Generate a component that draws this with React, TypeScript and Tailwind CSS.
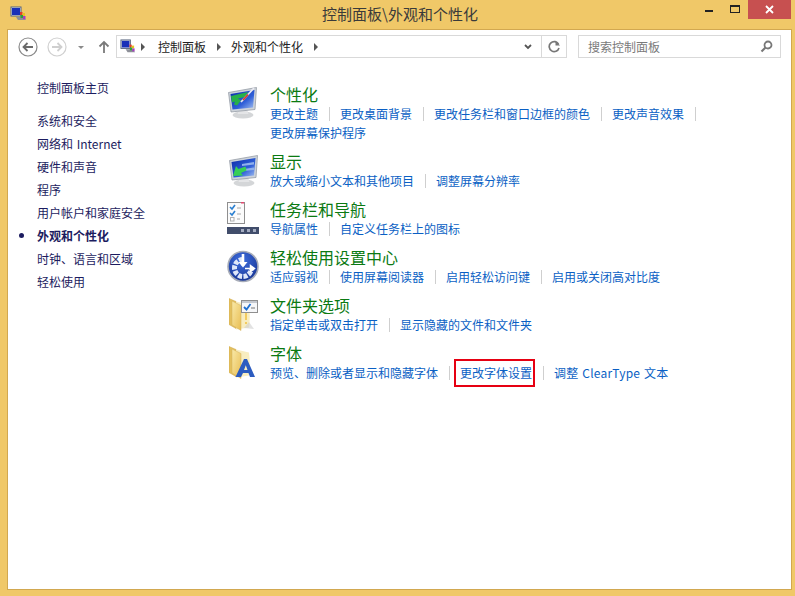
import React from "react";

const font = { fontFamily: '"Noto Sans CJK SC", "Noto Sans", sans-serif' };

function CpIcon({ size = 17 }: { size?: number }) {
  return (
    <svg width={size} height={size} viewBox="0 0 17 17">
      <rect x="1" y="1" width="10" height="9" fill="#dfe3ee" stroke="#55607a" />
      <rect x="2" y="2" width="8" height="7" fill="#1a2fb8" />
      <path d="M6 11h8l2 3H8z" fill="#8d8f98" />
      <rect x="10" y="6" width="2.5" height="3" fill="#e23c2c" />
      <rect x="12.5" y="7" width="2.5" height="3" fill="#e8c21e" />
      <rect x="10.5" y="9" width="2.5" height="3" fill="#2da33a" />
      <rect x="13" y="10" width="2.5" height="3" fill="#a63ec0" />
    </svg>
  );
}

function Monitor({ kind }: { kind: "brush" | "arrow" }) {
  const id = `scr-${kind}`;
  return (
    <svg width="31" height="32" viewBox="0 0 31 32">
      <defs>
        <linearGradient id={id} x1="0" y1="0" x2="1" y2="1">
          <stop offset="0" stopColor="#0b2aa8" />
          <stop offset=".6" stopColor="#2f5fd8" />
          <stop offset="1" stopColor="#a9c4f0" />
        </linearGradient>
      </defs>
      <ellipse cx="15" cy="28" rx="10.500" ry="3.500" fill="#d4d6d8" />
      <path d="M11 22h8l1.500 5h-11z" fill="#e4e5e7" />
      <path d="M0.500 5.500L28.500 0.500l-1.500 22L3 25z" fill="#cdd3da" stroke="#8c949e" strokeWidth=".7" />
      <path d="M2.500 7L26.500 3 25 20.500 4.500 22.500z" fill={`url(#${id})`} />
      {kind === "brush" ? (
        <>
          <path d="M3 9L20 5l-3 5-7 1.500 3 2-4 5-3-1 1-3-3 1z" fill="#27b04a" />
          <path d="M13 15L26 1" stroke="#e9e9f2" strokeWidth="1.800" />
          <path d="M15 13l5-5.500" stroke="#d8402e" strokeWidth="1.800" />
        </>
      ) : (
        <>
          <path d="M25 7L13 9v2l12-1.500zM25 12.500L15 14v2l10-1z" fill="#8fb0ec" />
          <path d="M4 21l3-10 2.500 3 7-2.500 1 4-5.500 2.500 2 2.500z" fill="#37cf55" />
        </>
      )}
    </svg>
  );
}

function Taskbar() {
  return (
    <svg width="32" height="32" viewBox="0 0 32 32">
      <rect x="0.500" y="0.500" width="17" height="21" fill="#fbfbfb" stroke="#8f8f8f" />
      <path d="M3 5l2 2 3-4M3 11l2 2 3-4" stroke="#2a7fd0" strokeWidth="1.600" fill="none" />
      <path d="M10 6h4M10 12h4M10 17h3" stroke="#a8a8a8" />
      <rect x="3.500" y="15.500" width="3.500" height="3.500" fill="#fff" stroke="#b0b0b0" />
      <rect x="14" y="0" width="3" height="1.500" fill="#e04a70" />
      <rect x="0" y="25" width="32" height="7" fill="#414d6b" />
      <rect x="14" y="27" width="3" height="3" fill="#a3abc0" />
      <rect x="20" y="27" width="3" height="3" fill="#a3abc0" />
      <rect x="26" y="27" width="3" height="3" fill="#a3abc0" />
    </svg>
  );
}

function Ease() {
  return (
    <svg width="32" height="33" viewBox="0 0 32 33">
      <defs>
        <radialGradient id="easeBg" cx=".45" cy=".3" r=".8">
          <stop offset="0" stopColor="#3f6fe0" />
          <stop offset="1" stopColor="#142f8c" />
        </radialGradient>
      </defs>
      <circle cx="16" cy="16.500" r="15" fill="url(#easeBg)" stroke="#a7acb8" strokeWidth="1.600" />
      <path d="M16 9.500a8.500 8.500 0 1 0 8.500 8.500" fill="none" stroke="#dfe7fa" strokeWidth="5" strokeDasharray="4 1.400" />
      <path d="M16 4v12" stroke="#fff" strokeWidth="2.600" />
      <path d="M11.500 12L16 17.500l4.500-5.500z" fill="#fff" />
      <path d="M18 18.500h8M23.500 15.500l4 3-4 3z" stroke="#fff" strokeWidth="1.500" fill="#fff" />
    </svg>
  );
}

function Folder({ kind }: { kind: "check" | "font" }) {
  const id = `fold-${kind}`;
  return (
    <svg width="29" height="33" viewBox="0 0 29 33">
      <defs>
        <linearGradient id={id} x1="0" y1="0" x2="1" y2="1">
          <stop offset="0" stopColor="#f9e9a8" />
          <stop offset="1" stopColor="#e8bd52" />
        </linearGradient>
      </defs>
      <path d="M0 0.500l7 3v27l-7-4z" fill="#e3c05e" stroke="#cfa748" strokeWidth=".5" />
      <path d="M7 3.500l13 3c1 7 1 16 0 23l-13 2z" fill="#f8edc0" />
      <path d="M3 3l9 4.500v25L3 27z" fill={`url(#${id})`} stroke="#d3b05a" strokeWidth=".5" />
      {kind === "check" ? (
        <>
          <path d="M15 30l5-6 5 7z" fill="#cfcfcf" opacity=".6" />
          <path d="M17 14v8M17 24v2" stroke="#f0c040" strokeWidth="1.500" />
          <rect x="12.500" y="2.500" width="16" height="12" fill="#f6f7f9" stroke="#8f8f8f" />
          <rect x="13" y="3" width="15" height="2" fill="#c4c8cf" />
          <path d="M15 9l2.500 2.500 4-5.500" stroke="#1f6fd0" strokeWidth="1.800" fill="none" />
          <path d="M22 10h4" stroke="#777" />
        </>
      ) : (
        <path d="M6.500 31L15 13h3l8 18h-5l-1.500-4h-5.500L12 31zM15 24h3.500l-1.700-4.800z" fill="#2c5cc0" fillRule="evenodd" />
      )}
    </svg>
  );
}

function Sep() {
  return <span className="w-px h-[14px] bg-[#cfcfcf] ml-[11px] mr-[10px] shrink-0" />;
}

function L({ children }: { children: React.ReactNode }) {
  return <span className="text-[#0a5fc4] whitespace-nowrap">{children}</span>;
}

function Group({ icon, title, lines, top = "pt-[2px]" }: { icon: React.ReactNode; title: string; lines: React.ReactNode[]; top?: string }) {
  return (
    <div className="flex">
      <div className={`w-[43px] shrink-0 ${top}`}>{icon}</div>
      <div>
        <div className="h-[19px] leading-[19px] text-[16px] text-[#0b7a12]">{title}</div>
        {lines.map((l, i) => (
          <div key={i} className="h-[19px] flex items-center text-[12px]">
            {l}
          </div>
        ))}
      </div>
    </div>
  );
}

const nav = ["系统和安全", "网络和 Internet", "硬件和声音", "程序", "用户帐户和家庭安全", "外观和个性化", "时钟、语言和区域", "轻松使用"];

export default function App() {
  return (
    <div style={font} className="w-[795px] h-[596px] bg-[#f0c868] flex flex-col overflow-hidden">
      <div className="h-[29px] flex shrink-0 relative">
        <div className="pl-[10px] pt-[6px] w-[322px]">
          <CpIcon size={17} />
        </div>
        <div className="text-[15px] leading-[28px] text-[#3a3a3a] whitespace-nowrap">控制面板\外观和个性化</div>
        <div className="ml-auto mr-[4px] flex h-[19px]">
          <div className="w-[26px] relative flex justify-center">
            <span className="block w-[8px] h-[2px] bg-[#222] mt-[10px]" />
          </div>
          <div className="w-[26px] flex justify-center">
            <span className="block w-[10px] h-[8px] border border-[#222] border-t-2 mt-[5px]" />
          </div>
          <div className="w-[43px] bg-[#c75050] flex items-center justify-center">
            <svg width="9" height="9" viewBox="0 0 9 9">
              <path d="M1 1l7 7M8 1L1 8" stroke="#fff" strokeWidth="1.800" />
            </svg>
          </div>
        </div>
      </div>
      <div className="flex-1 ml-[7px] mr-[3px] mb-[6px] bg-white border border-[#d2a850] flex flex-col text-[12px]">
        <div className="h-[33px] flex items-center shrink-0">
          <svg width="102" height="24" viewBox="0 0 102 24" className="shrink-0 ml-[10px]">
            <circle cx="10" cy="12" r="9" fill="#fff" stroke="#8a8a8a" strokeWidth="1.200" />
            <path d="M15 12H6M9.500 8L5.500 12l4 4" stroke="#6a6a6a" strokeWidth="1.800" fill="none" />
            <circle cx="39" cy="12" r="9" fill="#fff" stroke="#d0d0d0" strokeWidth="1.200" />
            <path d="M34 12h9M39.500 8l4 4-4 4" stroke="#cfcfcf" strokeWidth="1.800" fill="none" />
            <path d="M60 11h6l-3 3z" fill="#8a8a8a" />
            <path d="M86 18V7M81.500 11.500L86 7l4.500 4.500" stroke="#7a7a7a" strokeWidth="1.800" fill="none" />
          </svg>
          <div className="h-[23px] w-[451px] border border-[#d9d9d9] flex items-center ml-[-4px] shrink-0">
            <div className="ml-[3px] w-[18px]">
              <CpIcon size={16} />
            </div>
            <span className="ml-[3px] w-0 h-0 border-y-[4px] border-y-transparent border-l-[4px] border-l-[#555]" />
            <span className="ml-[13px] text-[#222]">控制面板</span>
            <span className="ml-[11px] w-0 h-0 border-y-[4px] border-y-transparent border-l-[4px] border-l-[#555]" />
            <span className="ml-[10px] text-[#222]">外观和个性化</span>
            <span className="ml-[11px] w-0 h-0 border-y-[4px] border-y-transparent border-l-[4px] border-l-[#555]" />
            <svg width="10" height="8" viewBox="0 0 10 8" className="ml-auto mr-[8px]">
              <path d="M2 2l3 3 3-3" stroke="#555" strokeWidth="1.800" fill="none" />
            </svg>
            <div className="w-[25px] h-full border-l border-[#d9d9d9] flex items-center justify-center">
              <svg width="13" height="13" viewBox="0 0 13 13">
                <path d="M10.500 4A5 5 0 1 0 11 8" stroke="#777" strokeWidth="1.700" fill="none" />
                <path d="M7.500 0.500v5h4.500z" fill="#777" />
              </svg>
            </div>
          </div>
          <div className="h-[23px] w-[203px] ml-[11px] border border-[#d9d9d9] flex items-center shrink-0">
            <span className="ml-[9px] text-[#7a7a7a]">搜索控制面板</span>
            <svg width="13" height="13" viewBox="0 0 13 13" className="ml-auto mr-[7px]">
              <circle cx="8" cy="5" r="3.500" fill="none" stroke="#777" strokeWidth="1.800" />
              <path d="M5.500 7.500L1.500 11.500" stroke="#777" strokeWidth="2.200" />
            </svg>
          </div>
        </div>
        <div className="flex flex-1 pt-[12px]">
          <div className="w-[219px] shrink-0 pl-[29px]">
            <div className="h-[23px] leading-[23px] text-[#1c1c60] mt-[1px] mb-[10px]">控制面板主页</div>
            {nav.map((n) => {
              const on = n === "外观和个性化";
              return (
                <div key={n} className={`h-[23px] leading-[23px] text-[#1c1c60] relative whitespace-nowrap ${on ? "font-bold" : ""}`}>
                  {on && <span className="absolute left-[-18px] top-[9px] w-[5px] h-[5px] rounded-full bg-[#1c1c60]" />}
                  {n === "网络和 Internet" ? <span className="[word-spacing:1px]">{n}</span> : n}
                </div>
              );
            })}
          </div>
          <div className="flex flex-col gap-[10px] pt-[10px]">
            <Group
              icon={<Monitor kind="brush" />}
              title="个性化"
              top="pt-[2px] pl-[1px]"
              lines={[
                <>
                  <L>更改主题</L>
                  <Sep />
                  <L>更改桌面背景</L>
                  <Sep />
                  <L>更改任务栏和窗口边框的颜色</L>
                  <Sep />
                  <L>更改声音效果</L>
                  <Sep />
                </>,
                <L>更改屏幕保护程序</L>,
              ]}
            />
            <Group
              icon={<Monitor kind="arrow" />}
              title="显示"
              top="pt-[3px] pl-[2px]"
              lines={[
                <>
                  <L>放大或缩小文本和其他项目</L>
                  <Sep />
                  <L>调整屏幕分辨率</L>
                </>,
              ]}
            />
            <Group
              icon={<Taskbar />}
              title="任务栏和导航"
              lines={[
                <>
                  <L>导航属性</L>
                  <Sep />
                  <L>自定义任务栏上的图标</L>
                </>,
              ]}
            />
            <Group
              icon={<Ease />}
              title="轻松使用设置中心"
              lines={[
                <>
                  <L>适应弱视</L>
                  <Sep />
                  <L>使用屏幕阅读器</L>
                  <Sep />
                  <L>启用轻松访问键</L>
                  <Sep />
                  <L>启用或关闭高对比度</L>
                </>,
              ]}
            />
            <Group
              icon={<Folder kind="check" />}
              title="文件夹选项"
              top="pt-[2px] pl-[2px]"
              lines={[
                <>
                  <L>指定单击或双击打开</L>
                  <Sep />
                  <L>显示隐藏的文件和文件夹</L>
                </>,
              ]}
            />
            <Group
              icon={<Folder kind="font" />}
              title="字体"
              top="pt-[2px] pl-[2px]"
              lines={[
                <>
                  <L>预览、删除或者显示和隐藏字体</L>
                  <Sep />
                  <span className="relative">
                    <L>更改字体设置</L>
                    <span className="absolute left-[-6px] right-[-3px] top-[-5px] bottom-[-5px] border-2 border-[#e60012]" />
                  </span>
                  <Sep />
                  <span className="text-[#0a5fc4] whitespace-nowrap tracking-[0.2px] [word-spacing:1px]">调整 ClearType 文本</span>
                </>,
              ]}
            />
          </div>
        </div>
      </div>
    </div>
  );
}
